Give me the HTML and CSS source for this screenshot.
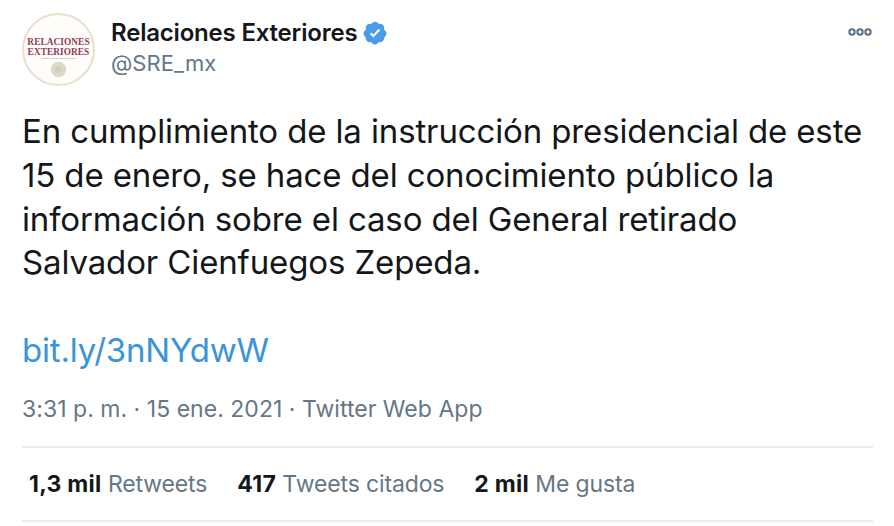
FILE: index.html
```html
<!DOCTYPE html>
<html lang="es">
<head>
<meta charset="utf-8">
<title>Relaciones Exteriores</title>
<link rel="stylesheet" href="styles.css">
</head>
<body>
<article class="tweet">
  <header class="head">
    <div class="avatar">
      <span class="av-t">RELACIONES</span>
      <span class="av-t">EXTERIORES</span>
      <span class="av-s">SECRETARÍA DE RELACIONES EXTERIORES</span>
      <span class="av-seal"></span>
    </div>
    <div class="who">
      <div class="name">Relaciones Exteriores
        <svg class="badge" viewBox="0 0 24 24" width="26" height="26"><path fill="#4a9be8" d="M22.5 12.5c0-1.58-.875-2.95-2.148-3.6.154-.435.238-.905.238-1.4 0-2.21-1.71-3.998-3.818-3.998-.47 0-.92.084-1.336.25C14.818 2.415 13.51 1.5 12 1.5s-2.816.917-3.437 2.25c-.415-.165-.866-.25-1.336-.25-2.11 0-3.818 1.79-3.818 4 0 .494.083.964.237 1.4-1.272.65-2.147 2.018-2.147 3.6 0 1.495.782 2.798 1.942 3.486-.02.17-.032.34-.032.514 0 2.21 1.708 4 3.818 4 .47 0 .92-.086 1.335-.25.62 1.334 1.926 2.25 3.437 2.25 1.512 0 2.818-.916 3.437-2.25.415.163.865.248 1.336.248 2.11 0 3.818-1.79 3.818-4 0-.174-.012-.344-.033-.513 1.158-.687 1.943-1.99 1.943-3.484z"/><path fill="#fff" d="M10.54 16.2l-3.3-3.3 1.4-1.4 1.86 1.87 4.9-5.3 1.45 1.35z"/></svg>
      </div>
      <div class="handle">@SRE_mx</div>
    </div>
    <svg class="more" viewBox="0 0 26 10" width="26" height="10"><circle cx="5" cy="5" r="2.7"/><circle cx="13" cy="5" r="2.7"/><circle cx="21" cy="5" r="2.7"/></svg>
  </header>
  <p class="body">En cumplimiento de la instrucción presidencial de este<br>15 de enero, se hace del conocimiento público la<br>información sobre el caso del General retirado<br>Salvador Cienfuegos Zepeda.</p>
  <p class="link">bit.ly/3nNYdwW</p>
  <p class="meta">3:31 p. m. · 15 ene. 2021 · Twitter Web App</p>
  <div class="stats">
    <span class="stat"><b>1,3 mil</b> Retweets</span>
    <span class="stat"><b>417</b> Tweets citados</span>
    <span class="stat"><b>2 mil</b> Me gusta</span>
  </div>
</article>
</body>
</html>
```
FILE: styles.css
```css
* { box-sizing: border-box; }
html, body { margin: 0; background: #fff; }
body { width: 894px; height: 526px; overflow: hidden; font-family: Inter, "Liberation Sans", sans-serif; color: #14171a; }
.tweet { padding: 13px 21px 0 22px; }
.head { display: flex; align-items: flex-start; height: 73px; }
.avatar { width: 73px; height: 73px; border-radius: 50%; border: 2px solid #e8dfcd; background: #fefdfa; display: flex; flex-direction: column; align-items: center; padding-top: 22px; flex: none; }
.av-t { font: bold 9.3px/10px "Liberation Serif", serif; color: #8a3c5a; white-space: nowrap; letter-spacing: .08px; }
.av-s { font: 1.6px/3px "Liberation Sans", sans-serif; color: #888; white-space: nowrap; }
.av-seal { width: 15px; height: 15px; border-radius: 50%; margin-top: 2px; background: radial-gradient(circle, #cfc8b4 0, #e0dbcb 55%, #c9c2ac 80%, #e6e1d2 100%); }
.who { margin-left: 16px; padding-top: 5px; flex: 1; }
.name { display: flex; align-items: center; gap: 5px; font-size: 24px; font-weight: 600; line-height: 30px; height: 30px; letter-spacing: -0.2px; }
.badge { flex: none; }
.handle { font-size: 22px; line-height: 30px; color: #657786; letter-spacing: 0.08px; }
.more { fill: none; stroke: none; margin-top: 14px; }
.more circle { fill: #fff; stroke: #5b7083; stroke-width: 2; }
.body { margin: 24px 0 0; font-size: 33px; line-height: 43.8px; letter-spacing: -0.13px; white-space: nowrap; }
.link { margin: 43px 0 0; font-size: 33px; line-height: 44px; color: #3b94d9; letter-spacing: -0.2px; }
.meta { margin: 22px 0 0; font-size: 23px; line-height: 30px; color: #657786; letter-spacing: 0.03px; }
.stats { margin-top: 22px; display: flex; gap: 30px; height: 76px; align-items: center; padding-left: 7px; border-top: 2px solid #e9ecee; border-bottom: 2px solid #e9ecee; font-size: 23px; color: #657786; letter-spacing: -0.13px; }
.stat b { color: #14171a; font-weight: 700; letter-spacing: 0.25px; }
```
